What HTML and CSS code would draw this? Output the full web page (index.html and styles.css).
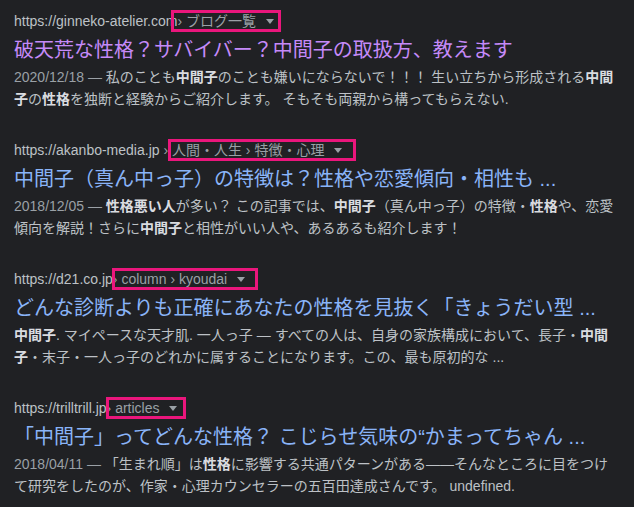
FILE: index.html
```html
<!DOCTYPE html>
<html lang="ja">
<head>
<meta charset="utf-8">
<title>中間子 検索結果</title>
<link rel="stylesheet" href="styles.css">
</head>
<body>
<div class="results">
  <div class="result">
    <div class="url"><span class="cite">https://ginneko-atelier.com</span><span class="mark mark--r1"><span class="crumb"> › ブログ一覧</span><span class="caret"></span></span></div>
    <h3 class="title title--visited">破天荒な性格？サバイバー？中間子の取扱方、教えます</h3>
    <div class="snippet"><span class="date">2020/12/18 — </span>私のことも<b>中間子</b>のことも嫌いにならないで！！！ 生い立ちから形成される<b>中間子</b>の<b>性格</b>を独断と経験からご紹介します。 そもそも両親から構ってもらえない.</div>
  </div>
  <div class="result">
    <div class="url"><span class="cite">https://akanbo-media.jp</span><span class="crumb"> › </span><span class="mark mark--r2"><span class="crumb">人間・人生 › 特徴・心理</span><span class="caret"></span></span></div>
    <h3 class="title">中間子（真ん中っ子）の特徴は？性格や恋愛傾向・相性も ...</h3>
    <div class="snippet"><span class="date">2018/12/05 — </span><b>性格悪い人</b>が多い？ この記事では、<b>中間子</b>（真ん中っ子）の特徴・<b>性格</b>や、恋愛傾向を解説！さらに<b>中間子</b>と相性がいい人や、あるあるも紹介します！</div>
  </div>
  <div class="result">
    <div class="url"><span class="cite">https://d21.co.jp</span><span class="mark mark--r3"><span class="crumb"> › column › kyoudai</span><span class="caret"></span></span></div>
    <h3 class="title">どんな診断よりも正確にあなたの性格を見抜く「きょうだい型 ...</h3>
    <div class="snippet"><b>中間子</b>. マイペースな天才肌. 一人っ子 — すべての人は、自身の家族構成において、長子・<b>中間子</b>・末子・一人っ子のどれかに属することになります。この、最も原初的な ...</div>
  </div>
  <div class="result">
    <div class="url"><span class="cite">https://trilltrill.jp</span><span class="mark mark--r4"><span class="crumb"> › articles</span><span class="caret"></span></span></div>
    <h3 class="title">「中間子」ってどんな性格？ こじらせ気味の“かまってちゃん ...</h3>
    <div class="snippet"><span class="date">2018/04/11 — </span>「生まれ順」は<b>性格</b>に影響する共通パターンがある——そんなところに目をつけて研究をしたのが、作家・心理カウンセラーの五百田達成さんです。 undefined.</div>
  </div>
</div>
</body>
</html>
```
FILE: styles.css
```css
html, body {
  margin: 0;
  padding: 0;
  background: #202124;
}
body {
  font-family: "Liberation Sans", Arial, "Noto Sans CJK JP", sans-serif;
  color: #bdc1c6;
}
.results {
  padding: 10px 14px 0 14px;
  width: 600px;
  display: flex;
  flex-direction: column;
  gap: 29px;
}
.result {
  display: flex;
  flex-direction: column;
}
.url {
  font-size: 14px;
  line-height: 22px;
  height: 22px;
  white-space: nowrap;
}
.cite {
  color: #bdc1c6;
}
.crumb {
  color: #9aa0a6;
}
.mark {
  display: inline-block;
  position: relative;
  line-height: 22px;
  height: 22px;
  vertical-align: top;
}
.mark::after {
  content: "";
  position: absolute;
  top: 0;
  bottom: 0;
  left: -4px;
  right: -7px;
  border: 3px solid #ea167c;
}
.mark--r1::after { left: -6px; right: -7px; }
.mark--r2::after { left: -4px; right: -14px; }
.mark--r3::after { left: -1px; right: -13px; }
.mark--r4::after { left: -1px; right: -9px; }
.caret {
  display: inline-block;
  margin-left: 10px;
  width: 0;
  height: 0;
  border-style: solid;
  border-width: 5px 4px 0 4px;
  border-color: #9aa0a6 transparent transparent transparent;
  vertical-align: middle;
  position: relative;
  top: -1px;
}
.title {
  margin: 5px 0 0 0;
  font-size: 20px;
  line-height: 26px;
  font-weight: normal;
  color: #8ab4f8;
  white-space: nowrap;
}
.title--visited {
  color: #c58af9;
}
.snippet {
  margin-top: 3px;
  font-size: 14px;
  line-height: 22px;
  color: #bdc1c6;
}
.snippet b {
  color: #dadce0;
  font-weight: bold;
}
.date {
  color: #9aa0a6;
}
```
